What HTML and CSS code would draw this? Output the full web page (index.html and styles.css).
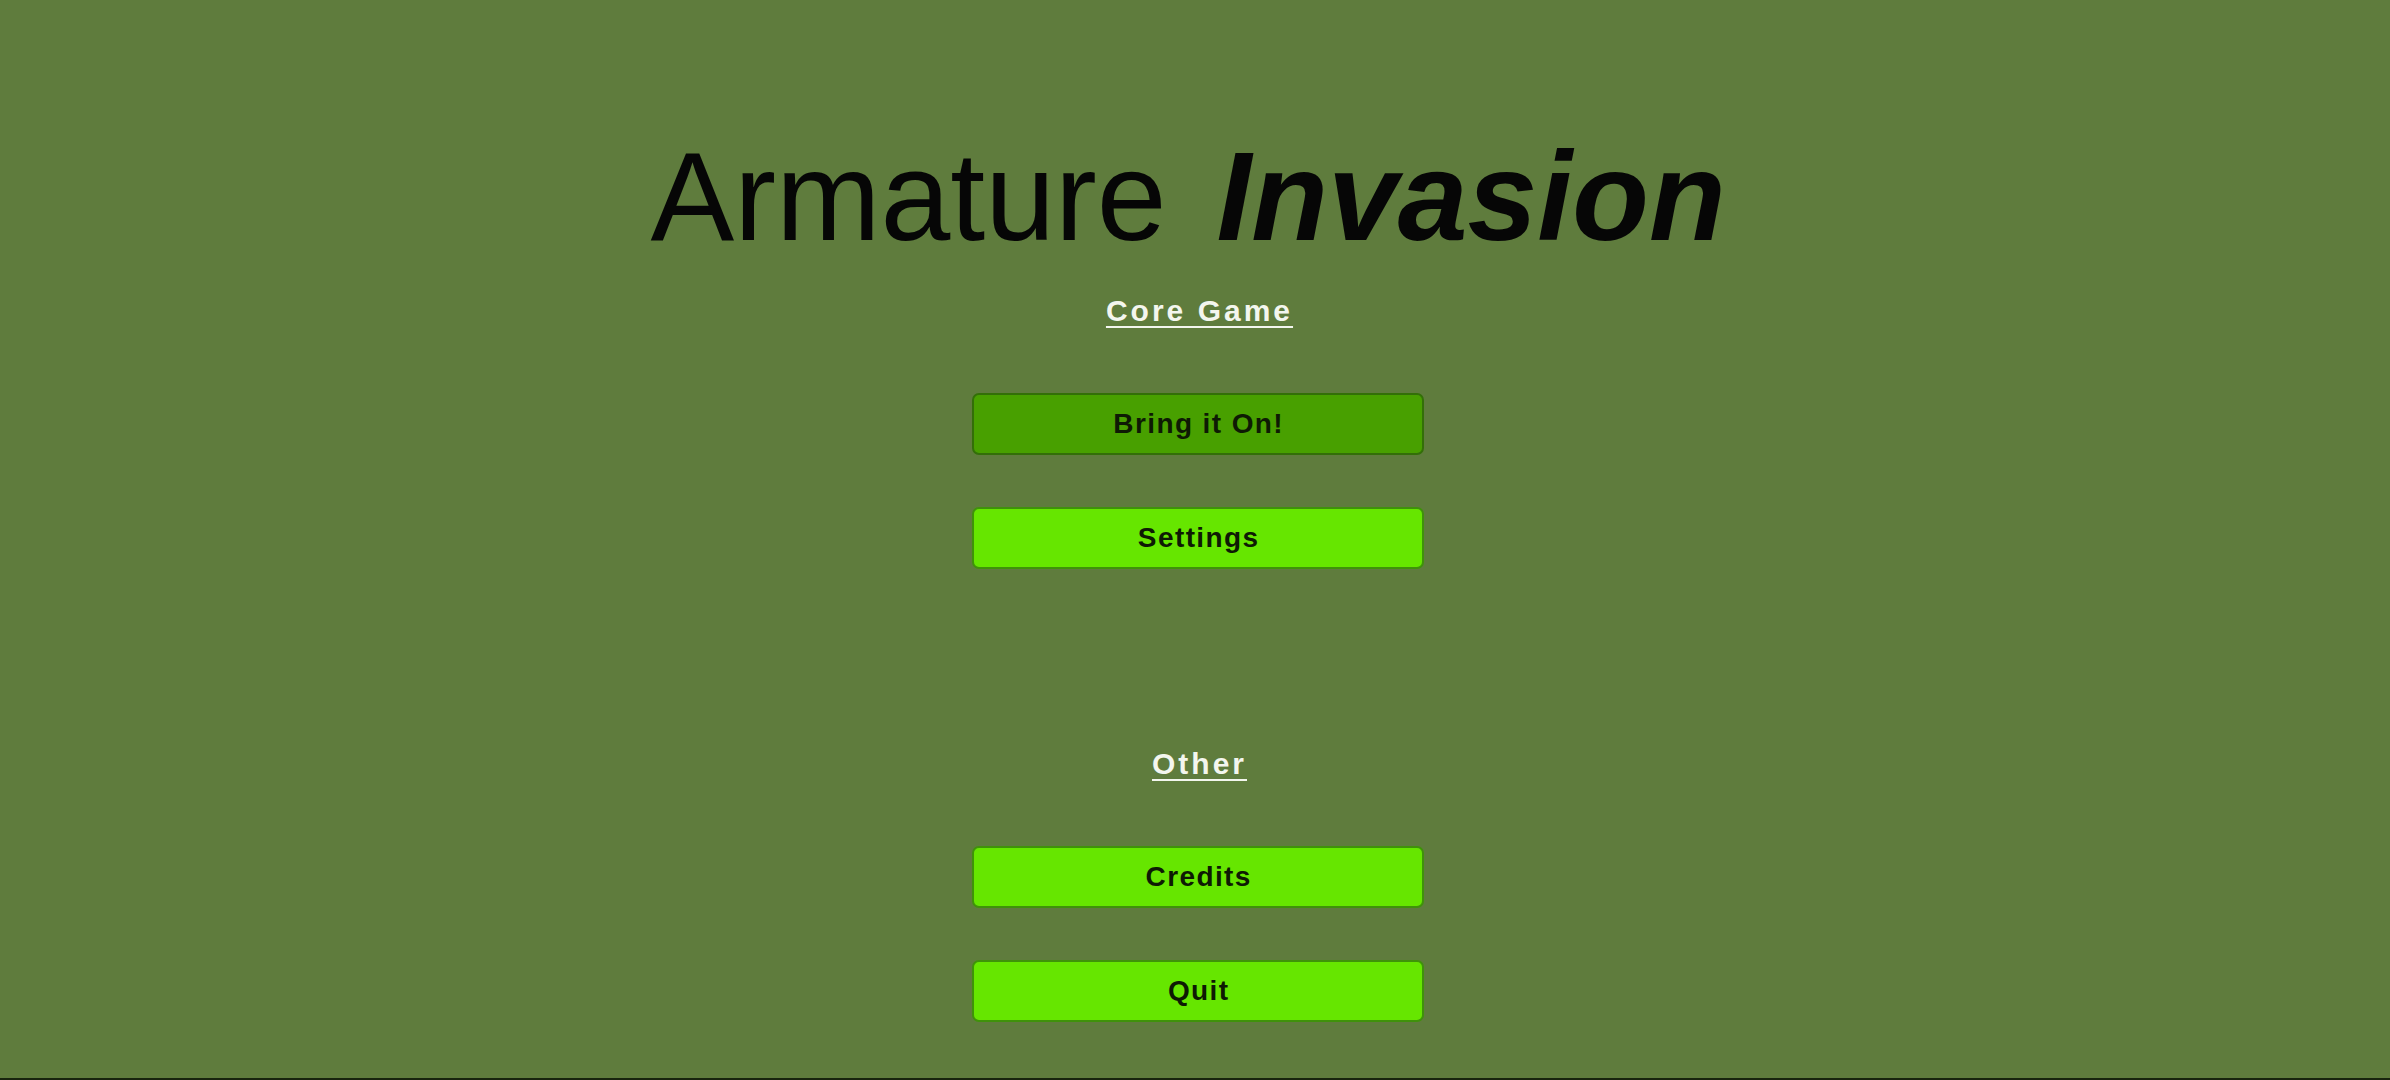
FILE: index.html
```html
<!DOCTYPE html>
<html lang="en">
<head>
<meta charset="utf-8">
<title>Armature Invasion</title>
<link rel="stylesheet" href="styles.css">
</head>
<body>
<main class="menu">
  <h1 class="title"><span class="title-light">Armature</span> <span class="title-bold">Invasion</span></h1>
  <h2 class="section-heading heading-core">Core Game</h2>
  <div class="button-group">
    <button class="menu-button is-active">Bring it On!</button>
    <button class="menu-button">Settings</button>
  </div>
  <h2 class="section-heading heading-other">Other</h2>
  <div class="button-group">
    <button class="menu-button">Credits</button>
    <button class="menu-button">Quit</button>
  </div>
</main>
</body>
</html>
```

FILE: styles.css
```css
html, body {
  margin: 0;
  padding: 0;
}

body {
  width: 2390px;
  height: 1080px;
  box-sizing: border-box;
  background: #5f7c3d;
  border-bottom: 2px solid #18240e;
  overflow: hidden;
  font-family: "Liberation Sans", Arial, sans-serif;
}

.menu {
  display: flex;
  flex-direction: column;
  align-items: center;
  padding-left: 6px;
}

.title {
  margin: 134px 0 0 0;
  padding-right: 20px;
  font-size: 125.5px;
  line-height: 125px;
  height: 125px;
  font-weight: normal;
  color: #060606;
  white-space: nowrap;
}

.title-bold {
  font-weight: bold;
  font-style: italic;
  margin-left: 15px;
}

.section-heading {
  margin: 0;
  font-size: 30px;
  line-height: 30px;
  height: 30px;
  font-weight: bold;
  letter-spacing: 3px;
  padding-left: 3px;
  color: #f3f6ee;
  text-decoration: underline;
  text-decoration-thickness: 2px;
  text-underline-offset: 5px;
}

.heading-core {
  margin-top: 37px;
}

.heading-other {
  margin-top: 180px;
}

.button-group {
  display: flex;
  flex-direction: column;
  gap: 52px;
  margin-top: 67px;
}

.menu-button {
  width: 452px;
  height: 62px;
  box-sizing: border-box;
  border: 2px solid #3f920a;
  border-radius: 7px;
  background: #66e600;
  color: #0e1a04;
  font-family: "Liberation Sans", Arial, sans-serif;
  font-size: 28px;
  font-weight: bold;
  letter-spacing: 1.4px;
  padding: 0 0 0 1.4px;
  cursor: pointer;
}

.menu-button.is-active {
  background: #48a000;
  border-color: #336f08;
}
```
